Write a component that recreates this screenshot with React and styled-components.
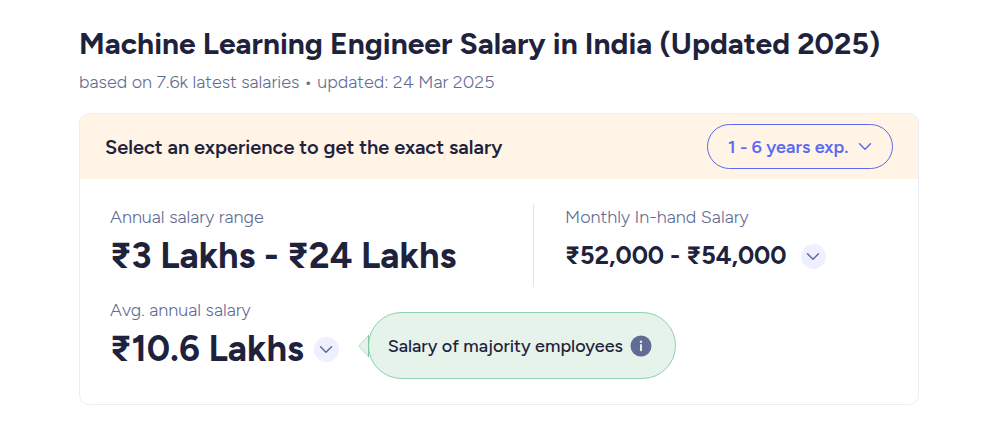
import { useState } from "react";
import styled, { createGlobalStyle } from "styled-components";

const experienceOptions = ["1 - 6 years exp.", "1 year exp.", "2 years exp.", "4 years exp.", "6 years exp."];

export default function App() {
  const [experience, setExperience] = useState(experienceOptions[0]);

  return (
    <>
      <GlobalStyle />
      <Page>
        <Title>Machine Learning Engineer Salary in India (Updated 2025)</Title>
        <Subtitle>based on 7.6k latest salaries • updated: 24 Mar 2025</Subtitle>
        <Card>
          <CardHeader>
            <Prompt htmlFor="experience">Select an experience to get the exact salary</Prompt>
            <SelectWrap>
              <Select id="experience" value={experience} onChange={(e) => setExperience(e.target.value)}>
                {experienceOptions.map((option) => (
                  <option key={option}>{option}</option>
                ))}
              </Select>
              <Chevron />
            </SelectWrap>
          </CardHeader>
          <CardBody>
            <TopRow>
              <div>
                <Label>Annual salary range</Label>
                <ValueRow>
                  <Value>₹3 Lakhs - ₹24 Lakhs</Value>
                </ValueRow>
              </div>
              <Monthly>
                <Label>Monthly In-hand Salary</Label>
                <ValueRow $gap="14px">
                  <Value $small>₹52,000 - ₹54,000</Value>
                  <ExpandButton aria-label="Show monthly salary details">
                    <Chevron />
                  </ExpandButton>
                </ValueRow>
              </Monthly>
            </TopRow>
            <BottomRow>
              <div>
                <Label>Avg. annual salary</Label>
                <ValueRow $gap="10px">
                  <Value>₹10.6 Lakhs</Value>
                  <ExpandButton aria-label="Show average salary details">
                    <Chevron />
                  </ExpandButton>
                </ValueRow>
              </div>
              <Callout>
                <CalloutArrow width="11" height="22" viewBox="0 0 11 22" aria-hidden="true">
                  <path d="M11 0 .7 11 11 22" fill="#e6f3ea" stroke="#b0dcc5" />
                  <path d="M10.5 0v22" stroke="#7cc9a1" />
                </CalloutArrow>
                Salary of majority employees
                <InfoButton aria-label="More information">
                  <svg width="22" height="22" viewBox="0 0 22 22" aria-hidden="true">
                    <circle cx="11" cy="11" r="10.5" fill="#626b94" />
                    <circle cx="11" cy="6.8" r="1.2" fill="#e6f3ea" />
                    <path d="M11 10v5.2" stroke="#e6f3ea" strokeWidth="2" strokeLinecap="round" />
                  </svg>
                </InfoButton>
              </Callout>
            </BottomRow>
          </CardBody>
        </Card>
      </Page>
    </>
  );
}

function Chevron() {
  return (
    <svg width="14" height="14" viewBox="0 0 14 14" fill="none" aria-hidden="true">
      <path d="M1.5 4.8 7 10.2l5.5-5.4" stroke="currentColor" strokeWidth="1.5" strokeLinecap="round" strokeLinejoin="round" />
    </svg>
  );
}

const GlobalStyle = createGlobalStyle`
  * {
    box-sizing: border-box;
  }

  body {
    margin: 0;
    background: #fff;
    color: #1e223c;
    font-family: Figtree, Lato, "Noto Sans", sans-serif;
  }

  button,
  select {
    font-family: inherit;
  }
`;

const Page = styled.main`
  padding: 24px 81px 32px 79px;
`;

const Title = styled.h1`
  margin: 0;
  font-size: 30px;
  font-weight: 700;
  line-height: 40px;
`;

const Subtitle = styled.p`
  margin: 6px 0 18px;
  color: #626b94;
  font-size: 18px;
  font-weight: 300;
  line-height: 25px;
`;

const Card = styled.section`
  border: 1px solid #ebecf5;
  border-radius: 10px;
  overflow: hidden;
`;

const CardHeader = styled.div`
  display: flex;
  align-items: center;
  justify-content: space-between;
  padding: 10px 25px;
  background: #fff4e6;
`;

const Prompt = styled.label`
  font-size: 20px;
  font-weight: 600;
`;

const SelectWrap = styled.div`
  position: relative;
  color: #5a6bf0;

  svg {
    position: absolute;
    top: 15px;
    right: 21px;
    pointer-events: none;
  }
`;

const Select = styled.select`
  appearance: none;
  width: 186px;
  height: 45px;
  padding: 0 40px 0 20px;
  border: 1px solid currentColor;
  border-radius: 24px;
  background: transparent;
  color: inherit;
  font-size: 18px;
  font-weight: 600;
  cursor: pointer;
`;

const CardBody = styled.div`
  padding: 25px 30px;
`;

const TopRow = styled.div`
  display: grid;
  grid-template-columns: 423fr 355fr;
  min-height: 83px;
`;

const Monthly = styled.div`
  padding-left: 31px;
  border-left: 1px solid #e1e3ee;
`;

const BottomRow = styled.div`
  display: flex;
  align-items: flex-start;
  gap: 29px;
  margin-top: 10px;
`;

const Label = styled.div`
  color: #626b94;
  font-size: 18px;
  font-weight: 300;
  line-height: 26px;
`;

const ValueRow = styled.div`
  display: flex;
  align-items: center;
  gap: ${({ $gap }) => $gap || "0"};
  height: 50px;
`;

const Value = styled.span`
  font-size: ${({ $small }) => ($small ? "25px" : "36px")};
  font-weight: 700;
  white-space: nowrap;
`;

const ExpandButton = styled.button`
  display: grid;
  place-items: center;
  width: 25px;
  height: 25px;
  margin-top: 2px;
  padding: 0;
  border: 0;
  border-radius: 50%;
  background: #eeefff;
  color: #626b94;
  cursor: pointer;
`;

const Callout = styled.div`
  position: relative;
  display: flex;
  align-items: center;
  justify-content: space-between;
  width: 308px;
  height: 67px;
  margin-top: 15px;
  padding: 0 23px 0 19px;
  border: 1px solid #8dd0ad;
  border-radius: 34px;
  background: #e6f3ea;
  font-size: 18px;
  font-weight: 500;
`;

const CalloutArrow = styled.svg`
  position: absolute;
  top: 22px;
  left: -11px;
`;

const InfoButton = styled.button`
  display: flex;
  padding: 0;
  border: 0;
  background: none;
  cursor: pointer;
`;
